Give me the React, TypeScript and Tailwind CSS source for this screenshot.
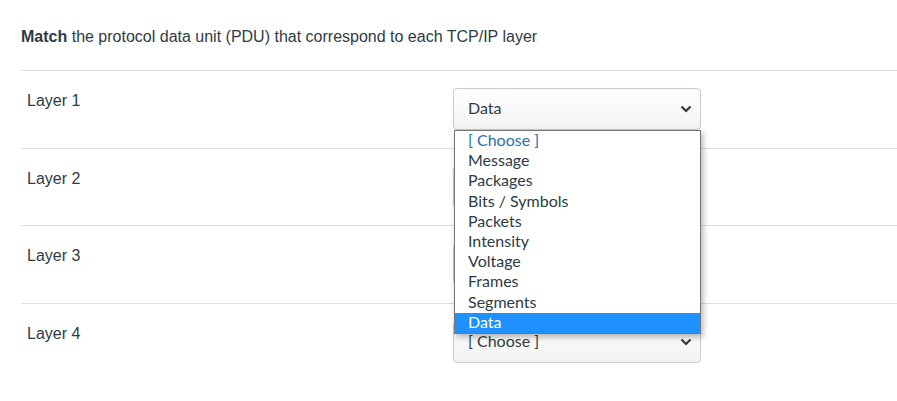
import { JSX } from "react";

const opciones = [
  "[ Choose ]",
  "Message",
  "Packages",
  "Bits / Symbols",
  "Packets",
  "Intensity",
  "Voltage",
  "Frames",
  "Segments",
  "Data",
];

const filas = [
  { capa: "Layer 1", valor: "Data" },
  { capa: "Layer 2", valor: "[ Choose ]" },
  { capa: "Layer 3", valor: "[ Choose ]" },
  { capa: "Layer 4", valor: "[ Choose ]" },
];

const Chevron = (): JSX.Element => (
  <svg width="12" height="8" viewBox="0 0 12 8" className="shrink-0">
    <path d="M1.5 1.5 L6 6 L10.5 1.5" fill="none" stroke="#2d3b45" strokeWidth="2.2" />
  </svg>
);

const Selector = ({ valor }: { valor: string }): JSX.Element => {
  return (
    <div className="relative w-[248px] h-[42px] flex items-center justify-between pl-[14px] pr-[8px] rounded-[4px] border border-[#c7cdd1] bg-gradient-to-b from-white to-[#f3f3f3] text-[16px] leading-[20px] text-[#2d3b45] font-['Lato',sans-serif]">
      <span className="-mt-[2px]">{valor}</span>
      <Chevron />
    </div>
  );
};

export default function App(): JSX.Element {
  return (
    <div className="relative w-[897px] h-[401px] bg-white overflow-hidden font-['Liberation_Sans',Arial,sans-serif] text-[#2d3b45]">
      <div className="pl-[21px] pt-[27px]">
        <p className="text-[16px] leading-[20px] pb-[23px]">
          <strong className="font-bold">Match</strong> the protocol data unit (PDU) that correspond to each TCP/IP layer
        </p>
        <div className="flex flex-col">
          {filas.map((fila, indice) => {
            return (
              <div
                key={indice}
                className="relative flex items-start border-t border-[#dddddd] h-[77.5px] pt-[17px]"
              >
                <div className="w-[432px] pl-[6px] pt-[3px] text-[16px] leading-[20px]">{fila.capa}</div>
                <div className="relative">
                  <Selector valor={fila.valor} />
                  {indice === 0 && (
                    <div className="absolute left-[1px] top-[42px] w-[247px] z-10 bg-white border border-[#767676] shadow-[2px_3px_6px_rgba(0,0,0,0.3)] font-['Lato',sans-serif] text-[16px] text-[#2d3b45] flex flex-col">
                      {opciones.map((opcion, i) => {
                        const primero = i === 0;
                        const ultimo = i === opciones.length - 1;
                        return (
                          <div
                            key={i}
                            className={`h-[20.2px] leading-[18px] pl-[13px] ${
                              ultimo ? "bg-[#1e90ff] text-white" : primero ? "text-[#2a6fa8]" : ""
                            }`}
                          >
                            {opcion}
                          </div>
                        );
                      })}
                    </div>
                  )}
                </div>
              </div>
            );
          })}
        </div>
      </div>
    </div>
  );
}
